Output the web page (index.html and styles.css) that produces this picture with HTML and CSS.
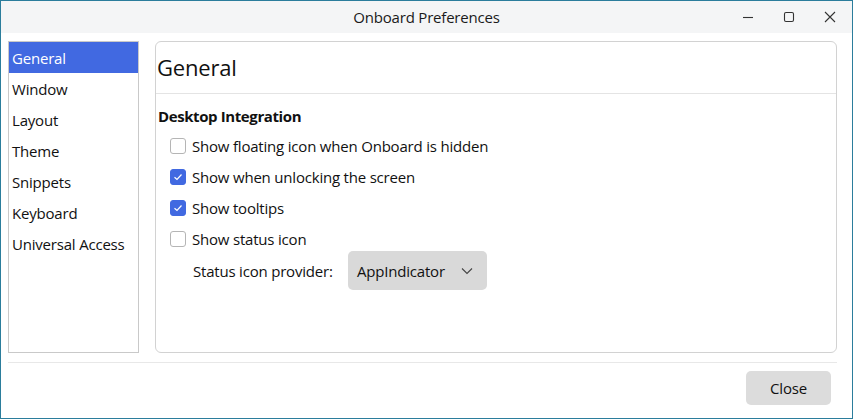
FILE: index.html
```html
<!DOCTYPE html>
<html>
<head>
<meta charset="utf-8">
<link rel="stylesheet" href="styles.css">
</head>
<body>
<div class="window">
  <div class="titlebar">
    <div class="title">Onboard Preferences</div>
    <div class="controls">
      <svg class="ctl" width="12" height="12" viewBox="0 0 12 12"><path d="M1 6.5H11" stroke="#333" stroke-width="1.1"/></svg>
      <svg class="ctl" width="12" height="12" viewBox="0 0 12 12"><rect x="1.5" y="1.5" width="9" height="9" rx="1.5" fill="none" stroke="#333" stroke-width="1.1"/></svg>
      <svg class="ctl" width="12" height="12" viewBox="0 0 12 12"><path d="M1 1L11 11M11 1L1 11" stroke="#333" stroke-width="1.1"/></svg>
    </div>
  </div>
  <div class="main">
    <ul class="sidebar">
      <li class="active">General</li>
      <li>Window</li>
      <li>Layout</li>
      <li>Theme</li>
      <li>Snippets</li>
      <li>Keyboard</li>
      <li>Universal Access</li>
    </ul>
    <div class="page">
      <div class="page-head">General</div>
      <div class="section">
        <div class="section-title">Desktop Integration</div>
        <div class="row"><span class="check"></span><span>Show floating icon when Onboard is hidden</span></div>
        <div class="row"><span class="check on"><svg width="16" height="16" viewBox="0 0 16 16"><path d="M4.5 8.2L7 10.5L11.5 5.5" fill="none" stroke="#fff" stroke-width="1.2"/></svg></span><span>Show when unlocking the screen</span></div>
        <div class="row"><span class="check on"><svg width="16" height="16" viewBox="0 0 16 16"><path d="M4.5 8.2L7 10.5L11.5 5.5" fill="none" stroke="#fff" stroke-width="1.2"/></svg></span><span>Show tooltips</span></div>
        <div class="row"><span class="check"></span><span>Show status icon</span></div>
        <div class="provider">
          <span class="plabel">Status icon provider:</span>
          <div class="combo"><span>AppIndicator</span><svg width="12" height="8" viewBox="0 0 12 8"><path d="M1 1.5L6 6.5L11 1.5" fill="none" stroke="#444" stroke-width="1.1"/></svg></div>
        </div>
      </div>
    </div>
  </div>
  <div class="sep"></div>
  <div class="footer">
    <button class="btn">Close</button>
  </div>
</div>
</body>
</html>
```
FILE: styles.css
```css
* { box-sizing: border-box; }
html, body { margin: 0; padding: 0; background: #fff; }
body { font-family: "Open Sans", "Noto Sans", sans-serif; color: #111; font-size: 15px; letter-spacing: -0.2px; }
.window {
  width: 853px; height: 419px;
  border: 1px solid #2b7d9c;
  display: flex; flex-direction: column;
  background: #fff;
}
.titlebar {
  height: 32px; background: #f4f5f6;
  position: relative;
  display: flex; align-items: center; justify-content: center;
}
.title { font-size: 15px; color: #1a1a1a; }
.controls {
  position: absolute; right: 16px; top: 10px;
  display: flex; gap: 29px;
}
.main {
  display: flex; gap: 16px;
  padding: 8px 15px 0 7px;
  height: 320px;
}
.sidebar {
  list-style: none; margin: 0; padding: 0;
  width: 131px; height: 312px;
  border: 1px solid #c9c9c9;
  background: #fff;
}
.sidebar li {
  height: 31px; line-height: 32px;
  padding-left: 3px;
  font-size: 15px; color: #111;
}
.sidebar li.active { background: #4169e1; color: #fff; }
.page {
  flex: 1; height: 312px;
  border: 1px solid #d2d2d2; border-radius: 6px;
}
.page-head {
  height: 52px; line-height: 50px;
  border-bottom: 1px solid #e4e4e4;
  font-size: 22px; padding-left: 1px;
}
.section { padding: 10px 0 0 2px; }
.section-title { font-weight: bold; font-size: 15px; letter-spacing: -0.4px; height: 26px; line-height: 24px; }
.row {
  display: flex; align-items: center; gap: 6px;
  height: 31px; padding-left: 12px;
}
.check {
  width: 16px; height: 16px; border-radius: 3px;
  border: 1px solid #b5b5b5; background: #fff;
  display: inline-flex;
}
.check.on { background: #4169e1; border-color: #4169e1; }
.check.on svg { margin: -1px; }
.provider { display: flex; align-items: center; padding-left: 35px; margin-top: -3px; }
.plabel { width: 155px; }
.combo {
  width: 139px; height: 39px; border-radius: 5px; background: #d9d9d9;
  display: flex; align-items: center; justify-content: space-between;
  padding: 0 14px 0 9px;
}
.sep { height: 1px; background: #e8e8e8; margin: 9px 15px 0 7px; }
.footer { display: flex; justify-content: flex-end; padding: 8px 21px 0 0; }
.btn {
  width: 85px; height: 34px; border: none; border-radius: 5px;
  background: #dcdcdc; font-family: inherit; font-size: 15px; color: #111; letter-spacing: -0.2px;
}
```
